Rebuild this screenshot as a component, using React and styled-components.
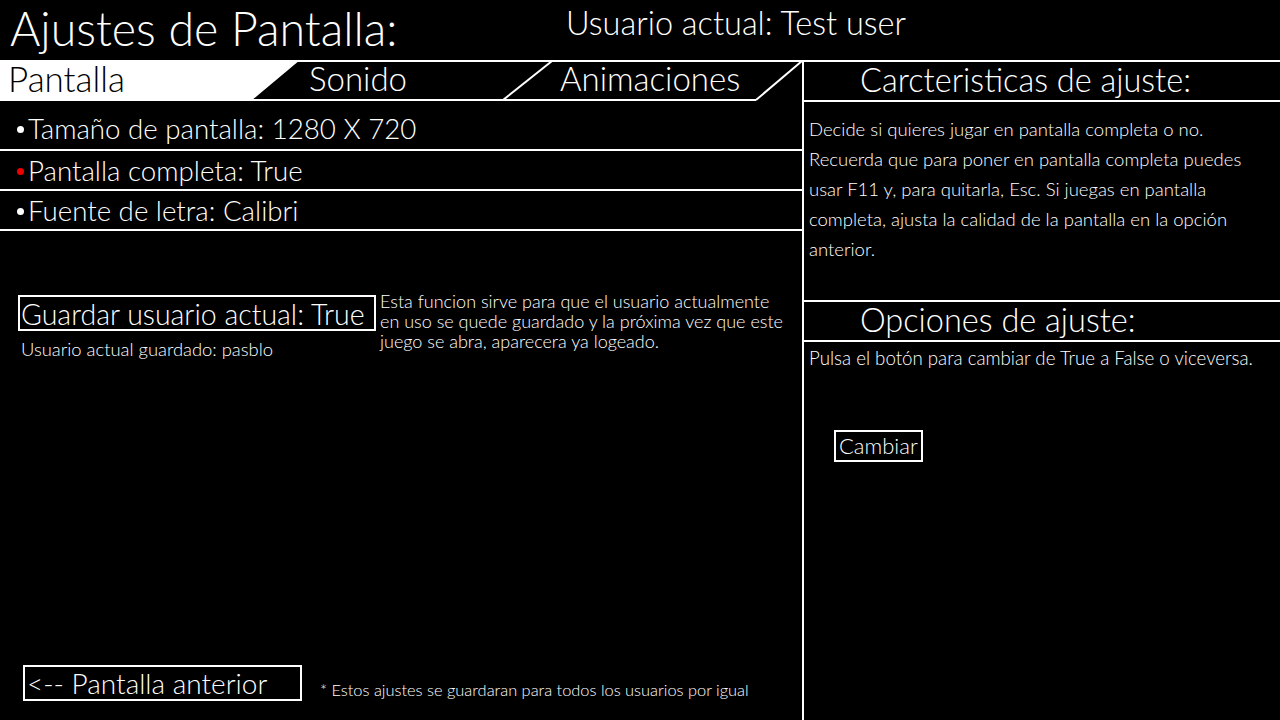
import React from "react";
import styled, { createGlobalStyle } from "styled-components";

const Global = createGlobalStyle`
	html, body {
		margin: 0;
		padding: 0;
		background: #000;
	}
	* {
		box-sizing: border-box;
	}
`;

const font = `Lato, "Open Sans", sans-serif`;

const Screen = styled.div`
	width: 1280px;
	height: 720px;
	background: #000;
	color: #fff;
	font-family: ${font};
	font-weight: 300;
	display: flex;
	flex-direction: column;
	overflow: hidden;
`;

const Header = styled.header`
	height: 60px;
	display: flex;
	align-items: flex-start;
`;

const Title = styled.h1`
	margin: 0;
	width: 566px;
	padding: 0 0 0 10px;
	font-size: 46.5px;
	font-weight: 300;
	line-height: 56px;
`;

const CurrentUser = styled.div`
	font-size: 32.5px;
	line-height: 45px;
`;

const Main = styled.main`
	flex: 1;
	display: flex;
`;

const LeftPanel = styled.section`
	width: 802px;
	display: flex;
	flex-direction: column;
`;

const TabBar = styled.nav`
	position: relative;
	height: 41px;
	display: flex;
`;

const TabShapes = styled.svg`
	position: absolute;
	inset: 0;
	pointer-events: none;
`;

const Tab = styled.div`
	position: relative;
	width: ${(p) => p.$width}px;
	padding-left: ${(p) => p.$pad}px;
	font-size: ${(p) => p.$size || 33}px;
	line-height: 37px;
	color: ${(p) => (p.$active ? "#000" : "#fff")};
`;

const Row = styled.div`
	height: ${(p) => p.$height}px;
	display: flex;
	align-items: center;
	padding: ${(p) => p.$top}px 0 0 17px;
	font-size: 27.7px;
	border-bottom: 2px solid #fff;
`;

const Bullet = styled.span`
	flex: none;
	width: 7px;
	height: 7px;
	margin-right: 4px;
	border-radius: 50%;
	background: ${(p) => p.$color || "#fff"};
	transform: translateY(1px);
`;

const SaveSection = styled.div`
	display: flex;
	padding: 64px 0 0 18px;
	gap: 4px;
`;

const SaveColumn = styled.div`
	display: flex;
	flex-direction: column;
`;

const BoxButton = styled.button`
	background: #000;
	color: #fff;
	border: 2px solid #fff;
	font-family: ${font};
	font-weight: 300;
	font-size: ${(p) => p.$size}px;
	padding: ${(p) => p.$pad};
	width: ${(p) => (p.$width ? `${p.$width}px` : "auto")};
	height: ${(p) => p.$height}px;
	text-align: left;
	line-height: 1;
	cursor: pointer;
	white-space: nowrap;
`;

const Small = styled.p`
	margin: ${(p) => p.$margin || 0};
	font-size: ${(p) => p.$size || 18}px;
	line-height: ${(p) => p.$lh || 20}px;
	padding: ${(p) => p.$pad || 0};
	white-space: nowrap;
`;

const Spacer = styled.div`
	flex: 1;
`;

const Footer = styled.div`
	display: flex;
	align-items: flex-end;
	padding: 0 0 19px 23px;
	gap: 18px;
`;

const RightPanel = styled.aside`
	flex: 1;
	border-left: 2px solid #fff;
	border-top: 2px solid #fff;
	display: flex;
	flex-direction: column;
`;

const PanelHead = styled.h2`
	margin: 0;
	height: ${(p) => p.$height}px;
	padding-left: 56px;
	font-size: 32.5px;
	font-weight: 300;
	line-height: 35px;
	border-bottom: 2px solid #fff;
	border-top: ${(p) => (p.$top ? "2px solid #fff" : "none")};
`;

const Description = styled.p`
	margin: 0;
	height: 198px;
	padding: 12px 0 0 5px;
	font-size: 18.5px;
	line-height: 30px;
	white-space: nowrap;
`;

const ButtonWrap = styled.div`
	padding: 60px 0 0 30px;
`;

function App() {
	return (
		<Screen>
			<Global />
			<Header>
				<Title>Ajustes de Pantalla:</Title>
				<CurrentUser>Usuario actual: Test user</CurrentUser>
			</Header>
			<Main>
				<LeftPanel>
					<TabBar>
						<TabShapes width="802" height="41" viewBox="0 0 802 41">
							<polygon points="0,0 300,0 251,41 0,41" fill="#fff" />
							<line x1="0" y1="1" x2="802" y2="1" stroke="#fff" strokeWidth="2" />
							<line x1="251" y1="40" x2="756" y2="40" stroke="#fff" strokeWidth="2" />
							<line x1="552" y1="1" x2="503" y2="40" stroke="#fff" strokeWidth="2" />
							<line x1="802" y1="1" x2="756" y2="40" stroke="#fff" strokeWidth="2" />
						</TabShapes>
						<Tab $width={300} $pad={8} $size={35} $active>
							Pantalla
						</Tab>
						<Tab $width={251} $pad={9}>
							Sonido
						</Tab>
						<Tab $width={251} $pad={9}>
							Animaciones
						</Tab>
					</TabBar>
					<Row $height={50} $top={6}>
						<Bullet />
						Tamaño de pantalla: 1280 X 720
					</Row>
					<Row $height={40} $top={0}>
						<Bullet $color="#e00" />
						Pantalla completa: True
					</Row>
					<Row $height={40} $top={0}>
						<Bullet />
						Fuente de letra: Calibri
					</Row>
					<SaveSection>
						<SaveColumn>
							<BoxButton $size={28.5} $pad="2px 0 0 1px" $width={358} $height={36}>
								Guardar usuario actual: True
							</BoxButton>
							<Small $size={18.4} $pad="8px 0 0 3px">
								Usuario actual guardado: pasblo
							</Small>
						</SaveColumn>
						<Small $margin="-4px 0 0 0">
							Esta funcion sirve para que el usuario actualmente
							<br />
							en uso se quede guardado y la próxima vez que este
							<br />
							juego se abra, aparecera ya logeado.
						</Small>
					</SaveSection>
					<Spacer />
					<Footer>
						<BoxButton $size={28} $pad="0 2px" $width={279} $height={36}>
							&lt;-- Pantalla anterior
						</BoxButton>
						<Small $size={16.4} $lh={18} $pad="0 0 2px 0">
							* Estos ajustes se guardaran para todos los usuarios por igual
						</Small>
					</Footer>
				</LeftPanel>
				<RightPanel>
					<PanelHead $height={40}>Carcteristicas de ajuste:</PanelHead>
					<Description>
						Decide si quieres jugar en pantalla completa o no.
						<br />
						Recuerda que para poner en pantalla completa puedes
						<br />
						usar F11 y, para quitarla, Esc. Si juegas en pantalla
						<br />
						completa, ajusta la calidad de la pantalla en la opción
						<br />
						anterior.
					</Description>
					<PanelHead $height={42} $top>
						Opciones de ajuste:
					</PanelHead>
					<Small $size={18.7} $pad="4px 0 0 5px" $lh={24}>
						Pulsa el botón para cambiar de True a False o viceversa.
					</Small>
					<ButtonWrap>
						<BoxButton $size={22} $pad="0 3px" $height={32}>
							Cambiar
						</BoxButton>
					</ButtonWrap>
				</RightPanel>
			</Main>
		</Screen>
	);
}

export default App;
